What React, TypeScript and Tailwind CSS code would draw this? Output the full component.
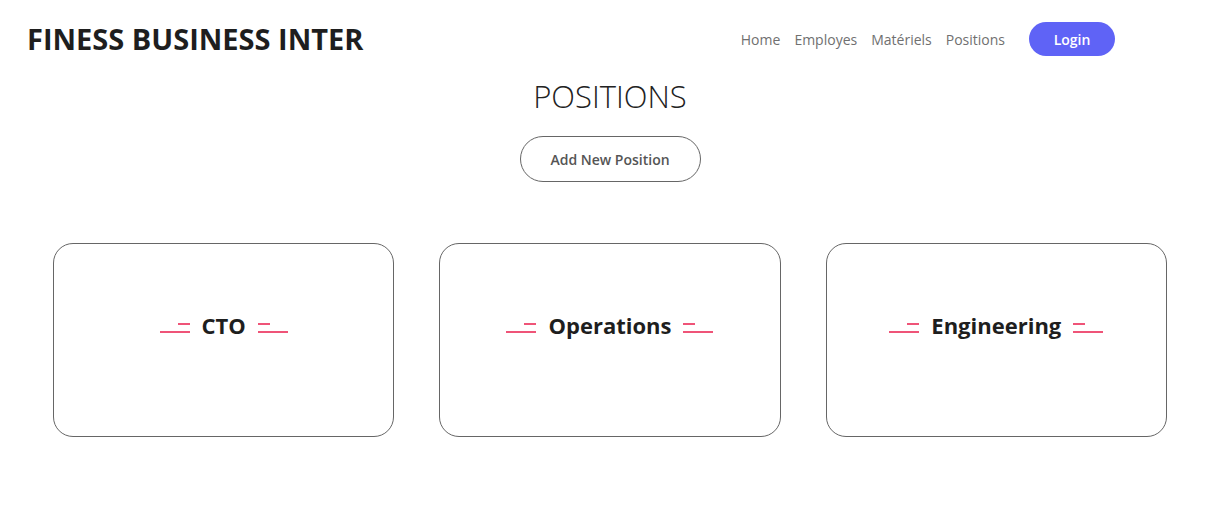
import React from "react";

function Deco({ side }: { side: "left" | "right" }) {
  return (
    <div className={`flex flex-col ${side === "left" ? "items-end" : "items-start"} gap-[6px] mt-[6px]`}>
      <div className="w-[12px] h-[2px] bg-[#ef5478]" />
      <div className="w-[30px] h-[2px] bg-[#ef5478]" />
    </div>
  );
}

function Card({ title }: { title: string }) {
  return (
    <div className="h-[194px] border border-[#666] rounded-[20px] flex items-center justify-center pb-[30px]">
      <div className="flex items-center gap-[12px]">
        <Deco side="left" />
        <span className="text-[22px] font-bold text-[#1e1e1e]">{title}</span>
        <Deco side="right" />
      </div>
    </div>
  );
}

export default function App() {
  return (
    <div className="w-[1230px] h-[509px] bg-white" style={{ fontFamily: "'Open Sans', 'Noto Sans', sans-serif" }}>
      <div className="w-[1220px]">
        <header className="flex items-center h-[78px] pl-[27px] pr-[105px]">
          <h1 className="text-[29px] font-bold text-[#1e1e1e]">FINESS BUSINESS INTER</h1>
          <nav className="ml-auto flex items-center text-[14px] font-medium text-[#707070] gap-[14px]">
            <span>Home</span>
            <span>Employes</span>
            <span>Matériels</span>
            <span>Positions</span>
            <button className="ml-[10px] w-[86px] h-[34px] rounded-full bg-[#5f63f6] text-white font-semibold text-[14px]">Login</button>
          </nav>
        </header>
        <div className="flex flex-col items-center">
          <h2 className="text-[31px] font-light text-[#222] leading-[36px]">POSITIONS</h2>
          <button className="mt-[22px] w-[181px] h-[46px] rounded-full border border-[#666] text-[14px] font-semibold text-[#555]">Add New Position</button>
        </div>
        <div className="grid grid-cols-3 gap-x-[45px] px-[53px] mt-[61px]">
          <Card title="CTO" />
          <Card title="Operations" />
          <Card title="Engineering" />
        </div>
      </div>
    </div>
  );
}
